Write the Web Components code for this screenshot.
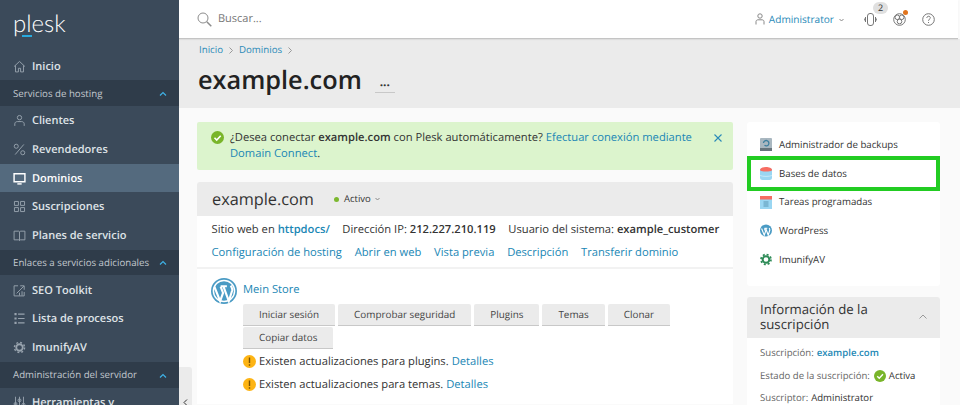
<!DOCTYPE html>
<html lang="es">
<head>
<meta charset="utf-8">
<title>example.com</title>
<style>
  html, body { margin: 0; height: 405px; overflow: hidden; background: #fafafa; }
  body { font: 11.2px/16px "Open Sans", sans-serif; color: #333; display: flex; text-rendering: geometricPrecision; }
</style>
</head>
<body>
<plesk-sidebar>
  <nav-item icon="home">Inicio</nav-item>
  <nav-group>Servicios de hosting</nav-group>
  <nav-item icon="user">Clientes</nav-item>
  <nav-item icon="percent">Revendedores</nav-item>
  <nav-item icon="monitor" active>Dominios</nav-item>
  <nav-item icon="grid">Suscripciones</nav-item>
  <nav-item icon="book">Planes de servicio</nav-item>
  <nav-group thin>Enlaces a servicios adicionales</nav-group>
  <nav-item icon="chart">SEO Toolkit</nav-item>
  <nav-item icon="list">Lista de procesos</nav-item>
  <nav-item icon="gear">ImunifyAV</nav-item>
  <nav-group>Administración del servidor</nav-group>
  <nav-item icon="sliders">Herramientas y</nav-item>
</plesk-sidebar>
<plesk-page>
  <plesk-topbar slot="top"></plesk-topbar>
  <plesk-title slot="top"></plesk-title>
  <domain-banner slot="main"></domain-banner>
  <domain-card slot="main"></domain-card>
  <side-links slot="side"></side-links>
  <subscription-info slot="side"></subscription-info>
</plesk-page>

<script>
// Stroke icons are kept in one table so nav-item can look them up by name
const ICONS = {
  home: '<path d="M1.500 9 9 2l7.500 7M3.500 7.500v9h4v-5h3v5h4v-9"/>',
  user: '<circle cx="9" cy="5" r="3"/><path d="M2.500 16.500v-3c0-2 2-3 3.500-3h6c1.500 0 3.500 1 3.500 3v3"/>',
  percent: '<circle cx="4.500" cy="4.500" r="2.800"/><circle cx="13.500" cy="13.500" r="2.800"/><path d="M15 2 3 16"/>',
  monitor: '<path d="M1.500 2.500h15v11h-15z" stroke-width="2"/><path d="M6 16.500h6" stroke-width="2"/>',
  grid: '<path d="M2 2h5.500v5.500H2zM10.500 2H16v5.500h-5.500zM2 10.500h5.500V16H2zM10.500 10.500H16V16h-5.500z"/>',
  book: '<path d="M1.500 3h6.500l1 1 1-1h6.500v12H10l-1 1-1-1H1.500zM9 4v12"/>',
  chart: '<path d="M7 2.500H1.500v14h14V11M5 13l10-10M10 2.500h5.500V8M9 16v-4M12.500 16v-6"/>',
  list: '<path d="M7 3h9M7 9h9M7 15h9" stroke-width="1.600"/><path d="M2 3h3M2 9h3M2 15h3" stroke-width="3" stroke-dasharray="3 1"/>',
  sliders: '<path d="M3.500 1v16M9 1v16M14.500 1v16"/><circle cx="3.500" cy="11" r="2"/><circle cx="9" cy="6" r="2"/><circle cx="14.500" cy="12" r="2"/>',
};

class PleskSidebar extends HTMLElement {
  constructor() {
    super();
    this.attachShadow({ mode: 'open' }).innerHTML = `
      <style>
        :host { display: block; flex: 0 0 179px; height: 405px; overflow: hidden; background: #3b4a5a; color: #e4e7ea; }
        .logo { display: block; height: 51.500px; padding: 10px 0 0 13px; box-sizing: border-box; font: 300 24px/28px "Lato", sans-serif; color: #fff; position: relative; }
        .logo i { position: absolute; left: 22px; top: 35px; width: 10px; height: 2px; background: #28aade; }
      </style>
      <div class="logo">plesk<i></i></div>
      <slot></slot>`;
  }
}

class NavItem extends HTMLElement {
  constructor() {
    super();
    const icon = this.getAttribute('icon');
    const art = icon === 'gear'
      ? '<circle cx="9" cy="9" r="4.500" fill="none" stroke="currentColor" stroke-width="2.500"/><circle cx="9" cy="9" r="7" fill="none" stroke="currentColor" stroke-width="2" stroke-dasharray="2.700 2.800"/>'
      : ICONS[icon];
    this.attachShadow({ mode: 'open' }).innerHTML = `
      <style>
        :host { display: flex; align-items: center; box-sizing: border-box; height: 28.700px; padding: 1.500px 0 0 13px; gap: 6px; font-size: 11px; font-weight: 550; color: #dfe3e7; }
        :host([active]) { background: #546a7e; color: #fff; }
        svg { width: 13px; height: 13px; flex: none; margin-top: -1px; color: #98a3ae; fill: none; stroke: currentColor; stroke-width: 1.300; }
        :host([active]) svg { color: #fff; }
      </style>
      <svg viewBox="0 0 18 18">${art}</svg><slot></slot>`;
  }
}

class NavGroup extends HTMLElement {
  constructor() {
    super();
    this.attachShadow({ mode: 'open' }).innerHTML = `
      <style>
        :host { display: flex; align-items: center; justify-content: space-between; box-sizing: border-box; height: 26px; padding: 1px 12px 0 13px; background: #2f3c4a; font-size: 9.700px; color: #c3c9cf; white-space: nowrap; }
        :host([thin]) { height: 25px; margin-bottom: 1px; }
        svg { width: 8px; height: 5px; fill: none; stroke: #3fb1e5; stroke-width: 1.200; }
      </style>
      <span><slot></slot></span>
      <svg viewBox="0 0 8 5"><path d="M1 4.500 4 1.500l3 3"/></svg>`;
  }
}

class PleskPage extends HTMLElement {
  constructor() {
    super();
    this.attachShadow({ mode: 'open' }).innerHTML = `
      <style>
        :host { display: block; flex: 1; min-width: 0; height: 405px; overflow: hidden; position: relative; }
        .body { display: flex; gap: 14px; padding: 14px 20px 0 18px; }
        .main { flex: 0 0 536px; min-width: 0; }
        .side { flex: 0 0 193px; min-width: 0; }
        /* collapse handle sits over the page gutter */
        .handle { position: absolute; left: 0; top: 367px; width: 13px; height: 38px; background: #ebebeb; border-radius: 0 3px 0 0; }
        .handle svg { position: absolute; left: 4px; top: 32px; width: 5px; height: 7px; fill: none; stroke: #333; }
      </style>
      <slot name="top"></slot>
      <div class="body">
        <div class="main"><slot name="main"></slot></div>
        <div class="side"><slot name="side"></slot></div>
      </div>
      <div class="handle"><svg viewBox="0 0 5 7"><path d="M4 .500 1 3.500l3 3"/></svg></div>`;
  }
}

class PleskTopbar extends HTMLElement {
  constructor() {
    super();
    this.attachShadow({ mode: 'open' }).innerHTML = `
      <style>
        :host { display: flex; align-items: center; height: 38px; margin-right: 2px; padding: 0 23px 0 18px; background: #fff; border-bottom: 1px solid #c4c4c4; box-shadow: 0 1px 1px rgba(0,0,0,.06); position: relative; font-size: 11px; }
        .search { width: 15px; height: 15px; fill: none; stroke: #8c8c8c; stroke-width: 1; margin-right: 6px; }
        .ph { color: #777; flex: 1; }
        .user { display: flex; align-items: center; font-size: 10.100px; font-weight: 500; color: #2a8ab8; margin-right: 20px; }
        .user svg { width: 10px; height: 12px; fill: none; stroke: #888; margin-right: 4px; }
        .caret { width: 5px !important; height: 4px !important; margin: 2px 0 0 5px !important; }
        .tool { width: 13px; height: 13px; fill: none; stroke: #777; stroke-width: 1; flex: none; display: block; }
        .slot { position: relative; margin-left: 16px; display: block; }
        .badge { position: absolute; left: 9px; top: -11px; width: 15px; height: 12px; border-radius: 6px; background: #e0e0e0; color: #333; font-size: 9px; line-height: 12px; text-align: center; }
        .dot { position: absolute; left: 10px; top: -3px; width: 5px; height: 5px; border-radius: 50%; background: #e0741d; }
      </style>
      <svg class="search" viewBox="0 0 15 15"><circle cx="6" cy="6" r="5"/><path d="m9.800 9.800 4.500 4.500" stroke-width="1.500"/></svg>
      <span class="ph">Buscar...</span>
      <span class="user">
        <svg viewBox="0 0 10 12"><circle cx="5" cy="3" r="2.200"/><path d="M1 11.500V8.500c0-1 1-1.700 2-1.700h4c1 0 2 .7 2 1.700v3"/></svg>
        Administrator
        <svg class="caret" viewBox="0 0 5 4"><path d="m.5 1 2 2 2-2"/></svg>
      </span>
      <span class="slot" style="margin-left:0"><span class="badge">2</span>
        <svg class="tool" viewBox="0 0 13 13"><rect x="3.500" y=".5" width="6" height="12" rx="2.500"/><path d="M1.500 4v5M11.500 4v5M.3 5.500v2M12.700 5.500v2"/></svg></span>
      <span class="slot"><i class="dot"></i>
        <svg class="tool" viewBox="0 0 13 13"><circle cx="6.500" cy="6.500" r="5.800"/><circle cx="4.300" cy="4.300" r="2.300"/><circle cx="8.700" cy="4.300" r="2.300"/><circle cx="6.500" cy="8.500" r="2.300"/></svg></span>
      <span class="slot">
        <svg class="tool" viewBox="0 0 13 13"><circle cx="6.500" cy="6.500" r="5.800"/><path d="M4.800 5c0-2.300 3.500-2.300 3.500-.2 0 1.400-1.800 1.500-1.800 3M6.500 9v1"/></svg></span>`;
  }
}

class PleskTitle extends HTMLElement {
  constructor() {
    super();
    this.attachShadow({ mode: 'open' }).innerHTML = `
      <style>
        :host { display: block; height: 69px; padding: 5px 0 0 20px; background: #ebebeb; box-sizing: border-box; }
        .crumbs { display: flex; align-items: center; gap: 6px; font-size: 9.700px; line-height: 12px; color: #2a8ab8; }
        .crumbs svg { width: 4px; height: 7px; fill: none; stroke: #999; }
        .head { display: flex; align-items: flex-end; margin: 8px 0 0 -1px; }
        h1 { margin: 0; font: 550 25.300px/32px "Open Sans", sans-serif; color: #222; }
        .more { width: 20px; height: 15px; margin: 0 0 3px 13px; border-bottom: 1px solid #c8c8c8; font-size: 12px; line-height: 10px; font-weight: 700; text-align: center; color: #333; }
      </style>
      <div class="crumbs">Inicio <svg viewBox="0 0 4 7"><path d="m.5.5 3 3-3 3"/></svg> Dominios <svg viewBox="0 0 4 7"><path d="m.5.5 3 3-3 3"/></svg></div>
      <div class="head"><h1>example.com</h1><div class="more">...</div></div>`;
  }
}

class DomainBanner extends HTMLElement {
  constructor() {
    super();
    this.attachShadow({ mode: 'open' }).innerHTML = `
      <style>
        :host { display: flex; align-items: flex-start; box-sizing: border-box; height: 48px; padding: 8px 11px 0 14px; background: #dcf4cd; border-radius: 2px; font-size: 11.200px; line-height: 16px; color: #333; }
        svg.ok { width: 13px; height: 13px; flex: none; margin: 1px 6px 0 0; }
        .text { flex: 1; }
        a { color: #1b87b5; }
        svg.x { width: 8px; height: 8px; flex: none; margin: 4px 0 0 12px; fill: none; stroke: #2a8ab8; stroke-width: 1.100; }
      </style>
      <svg class="ok" viewBox="0 0 13 13"><circle cx="6.500" cy="6.500" r="6.500" fill="#79b52a"/><path d="m3.500 6.800 2.200 2.200 4-4.300" fill="none" stroke="#fff" stroke-width="1.600"/></svg>
      <span class="text">¿Desea conectar <b style="font-weight:600">example.com</b> con Plesk automáticamente? <a>Efectuar conexión mediante Domain Connect</a>.</span>
      <svg class="x" viewBox="0 0 8 8"><path d="m.5.5 7 7m0-7-7 7"/></svg>`;
  }
}

class DomainCard extends HTMLElement {
  constructor() {
    super();
    this.attachShadow({ mode: 'open' }).innerHTML = `
      <style>
        :host { display: block; margin-top: 12px; background: #fff; border-radius: 3px 3px 0 0; font-size: 11.200px; }
        a { color: #1b87b5; }
        .head { display: flex; align-items: center; height: 34px; padding-left: 15px; background: #ebebeb; border-radius: 3px 3px 0 0; }
        .name { font-size: 16.300px; font-weight: 500; color: #333; margin-right: 20px; }
        .status { display: flex; align-items: center; font-size: 9.500px; font-weight: 500; color: #333; }
        .status i { width: 5px; height: 5px; border-radius: 50%; background: #7cb82f; margin-right: 5px; }
        .status svg { width: 5px; height: 4px; margin-left: 4px; fill: none; stroke: #888; }
        .facts { display: flex; gap: 12.500px; margin: 6px 0 0 14.500px; white-space: nowrap; }
        .facts b { font-weight: 550; color: #333; }
        .links { display: flex; gap: 12.800px; margin: 7px 0 0 14.500px; white-space: nowrap; }
        hr { height: 2px; margin: 6px 0 0; border: 0; background: #f2f2f2; }
        .site { display: grid; grid-template-columns: 26px 1fr; padding: 9px 14px 0; }
        .logo { width: 26px; height: 26px; }
        .body { min-width: 0; }
        .title { display: block; margin: 4px 0 6px 6px; }
        .buttons { display: flex; flex-wrap: wrap; gap: 1px 3px; margin-left: 6px; }
        .note { display: flex; align-items: center; gap: 3px; height: 23px; white-space: nowrap; }
        .notes { margin-top: 1px; padding: 0 0 8px 46px; }
        .warn { width: 13px; height: 13px; flex: none; }
      </style>
      <div class="head"><span class="name">example.com</span>
        <span class="status"><i></i>Activo<svg viewBox="0 0 5 4"><path d="m.5 1 2 2 2-2"/></svg></span></div>
      <div class="facts"><span>Sitio web en <a><b style="color:#1b87b5;font-weight:600">httpdocs/</b></a></span><span>Dirección IP: <b>212.227.210.119</b></span><span>Usuario del sistema: <b>example_customer</b></span></div>
      <div class="links"><a>Configuración de hosting</a><a>Abrir en web</a><a>Vista previa</a><a>Descripción</a><a>Transferir dominio</a></div>
      <hr>
      <div class="site">
        <svg class="logo" viewBox="0 0 27 27"><circle cx="13.500" cy="13.500" r="13.500" fill="#4a9bc4"/><circle cx="13.500" cy="13.500" r="11" fill="none" stroke="#fff" stroke-width="1.500"/><path d="M3.500 9 9.500 24l3-8.500-2.500-6.500M10 8.500h6.500M13 9l5.500 15 3.500-11c.5-2-.5-3.500-1.500-5" fill="none" stroke="#fff" stroke-width="2.200"/></svg>
        <div class="body">
          <a class="title">Mein Store</a>
          <div class="buttons">
            <plesk-button>Iniciar sesión</plesk-button>
            <plesk-button>Comprobar seguridad</plesk-button>
            <plesk-button>Plugins</plesk-button>
            <plesk-button>Temas</plesk-button>
            <plesk-button>Clonar</plesk-button>
            <plesk-button>Copiar datos</plesk-button>
          </div>
        </div>
      </div>
      <div class="notes">
        <div class="note"><svg class="warn" viewBox="0 0 13 13"><circle cx="6.500" cy="6.500" r="6.500" fill="#fdb414"/><path d="M6.500 2.500v5.500M6.500 9.200v1.500" stroke="#7a5200" stroke-width="1.400"/></svg>Existen actualizaciones para plugins. <a>Detalles</a></div>
        <div class="note"><svg class="warn" viewBox="0 0 13 13"><circle cx="6.500" cy="6.500" r="6.500" fill="#fdb414"/><path d="M6.500 2.500v5.500M6.500 9.200v1.500" stroke="#7a5200" stroke-width="1.400"/></svg>Existen actualizaciones para temas. <a>Detalles</a></div>
      </div>`;
  }
}

class PleskButton extends HTMLElement {
  constructor() {
    super();
    this.attachShadow({ mode: 'open' }).innerHTML = `
      <style>
        :host { display: inline-block; height: 21px; padding: 0 16px; background: #ebebeb; border-bottom: 1px solid #c8c8c8; border-radius: 2px 2px 0 0; font-size: 9.900px; font-weight: 500; line-height: 21px; color: #444; white-space: nowrap; }
      </style><slot></slot>`;
  }
}

class SideLinks extends HTMLElement {
  constructor() {
    super();
    this.attachShadow({ mode: 'open' }).innerHTML = `
      <style>
        :host { display: block; box-sizing: border-box; height: 164px; padding: 8.500px 0 0; background: #fff; border-radius: 3px; font-size: 9.700px; color: #333; }
        .row { display: flex; align-items: center; gap: 7px; height: 28.700px; padding-left: 13px; box-sizing: border-box; }
        .row.hl { outline: 4px solid #22cc22; outline-offset: -4px; height: 35px; margin: -3.150px 0; position: relative; }
        svg { width: 12px; height: 13px; flex: none; }
      </style>
      <div class="row"><svg viewBox="0 0 12 13"><rect width="12" height="13" rx="1" fill="#a9b7c0"/><rect y="10" width="12" height="3" fill="#67747c"/><path d="M3.500 5a2.700 2.700 0 1 1 1 2.300" fill="none" stroke="#3d7f9e" stroke-width="1.300"/></svg>Administrador de backups</div>
      <div class="row hl"><svg viewBox="0 0 12 13"><rect y="1" width="12" height="12" rx="2.500" fill="#9ad6f2"/><path d="M0 3c0-4 12-4 12 0 0 2-12 2-12 0z" fill="#f76d62"/><path d="M0 8.500c3 1.200 9 1.200 12 0" fill="none" stroke="#c7e9f8"/></svg>Bases de datos</div>
      <div class="row"><svg viewBox="0 0 12 13"><rect y="1" width="12" height="12" fill="#9ad6f2"/><rect y="0" width="12" height="3.500" fill="#f76d62"/><path d="M3.500 6h5M3.500 8h5M3.500 10h5" stroke="#5b97b4"/></svg>Tareas programadas</div>
      <div class="row"><svg viewBox="0 0 27 27"><circle cx="13.500" cy="13.500" r="13.500" fill="#4a9bc4"/><path d="M3.500 9 9.500 24l3-8.500-2.500-6.500M10 8.500h6.500M13 9l5.500 15 3.500-11c.5-2-.5-3.500-1.500-5" fill="none" stroke="#fff" stroke-width="2.500"/></svg>WordPress</div>
      <div class="row"><svg viewBox="0 0 18 18"><circle cx="9" cy="9" r="5" fill="none" stroke="#2e8b57" stroke-width="3"/><circle cx="9" cy="9" r="7.500" fill="none" stroke="#2e8b57" stroke-width="2.500" stroke-dasharray="3 2.900"/></svg>ImunifyAV</div>`;
  }
}

class SubscriptionInfo extends HTMLElement {
  constructor() {
    super();
    this.attachShadow({ mode: 'open' }).innerHTML = `
      <style>
        :host { display: block; margin-top: 11px; background: #fff; border-radius: 3px 3px 0 0; font-size: 9.600px; color: #666; }
        .head { display: flex; align-items: center; justify-content: space-between; box-sizing: border-box; height: 41px; padding: 0 13px; background: #ebebeb; border-radius: 3px 3px 0 0; font-size: 13.200px; line-height: 15px; font-weight: 500; color: #333; }
        .head span { margin-top: -1px; }
        .head svg { width: 8px; height: 5px; margin-bottom: 2px; fill: none; stroke: #999; }
        .list { padding: 4px 13px 0; }
        .row { display: flex; align-items: center; gap: 3px; height: 22.500px; white-space: nowrap; }
        b { font-weight: 500; color: #333; }
        a { color: #1b87b5; font-weight: 600; }
        svg.ok { width: 12px; height: 12px; flex: none; margin-left: 1px; }
      </style>
      <div class="head"><span>Información de la<br>suscripción</span><svg viewBox="0 0 8 5"><path d="M.5 4.500 4 1l3.500 3.500"/></svg></div>
      <div class="list">
        <div class="row">Suscripción: <a>example.com</a></div>
        <div class="row">Estado de la suscripción: <svg class="ok" viewBox="0 0 13 13"><circle cx="6.500" cy="6.500" r="6.500" fill="#79b52a"/><path d="m3.500 6.800 2.200 2.200 4-4.300" fill="none" stroke="#fff" stroke-width="1.500"/></svg> <b>Activa</b></div>
        <div class="row">Suscriptor: <b>Administrator</b></div>
      </div>`;
  }
}

customElements.define('plesk-sidebar', PleskSidebar);
customElements.define('nav-item', NavItem);
customElements.define('nav-group', NavGroup);
customElements.define('plesk-page', PleskPage);
customElements.define('plesk-topbar', PleskTopbar);
customElements.define('plesk-title', PleskTitle);
customElements.define('domain-banner', DomainBanner);
customElements.define('domain-card', DomainCard);
customElements.define('plesk-button', PleskButton);
customElements.define('side-links', SideLinks);
customElements.define('subscription-info', SubscriptionInfo);
</script>
</body>
</html>
